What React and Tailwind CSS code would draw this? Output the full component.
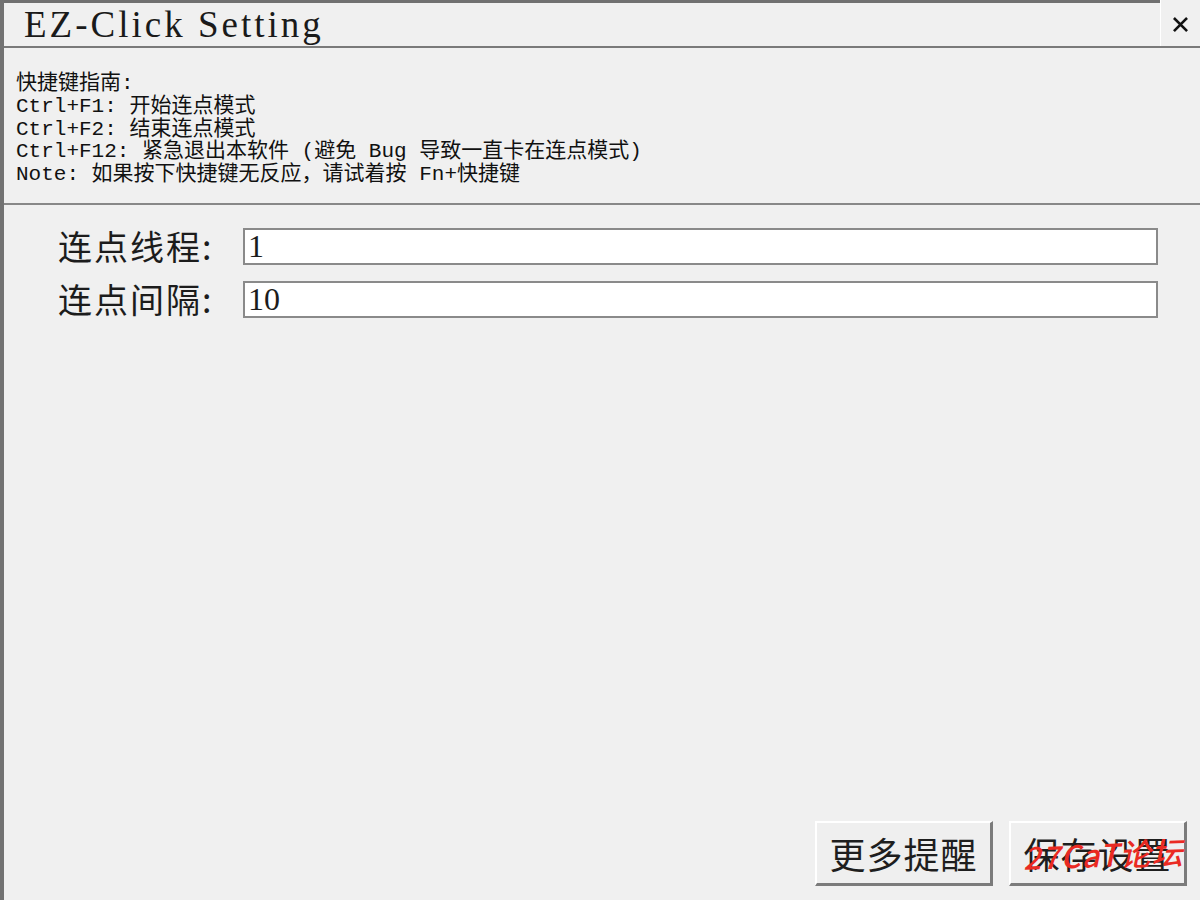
const mono = { fontFamily: '"Liberation Mono", "Noto Sans CJK SC", monospace' };

function CloseIcon() {
  return (
    <svg width="15" height="15" viewBox="0 0 16 16" className="block">
      <path d="M2 2 L14 14 M14 2 L2 14" stroke="#111" strokeWidth="2.8" strokeLinecap="square" />
    </svg>
  );
}

function Field({ label, value }) {
  return (
    <div className="flex items-center">
      <div className="w-[239px] shrink-0 pl-[54px] whitespace-nowrap text-[34px] leading-none text-[#1c1c1c] font-['Noto_Sans_CJK_SC',sans-serif] tracking-[2px]">
        {label}
      </div>
      <div className="flex-1 h-[37px] bg-white border-2 border-[#8a8a8a] flex items-center pl-[3px] text-[32px] leading-none text-[#1c1c1c] font-['Liberation_Serif','Noto_Sans_CJK_SC',serif]">
        {value}
      </div>
    </div>
  );
}

function RaisedButton({ children, mark }) {
  return (
    <button className="relative w-[178px] h-[65px] bg-[#efefef] border-t-2 border-l-2 border-t-white border-l-white border-b-[3px] border-r-[3px] border-b-[#7b7b7b] border-r-[#7b7b7b] flex items-center justify-center text-[36px] leading-none text-[#1e1e1e] font-['Noto_Sans_CJK_SC',sans-serif] tracking-[1px]">
      {children}
      {mark && (
        <span className="absolute left-[12px] top-[15px] whitespace-nowrap text-[31px] italic font-medium text-[#ea2a22] font-['Noto_Sans_CJK_SC',sans-serif] -rotate-2 tracking-[1px]">
          27CaT论坛
        </span>
      )}
    </button>
  );
}

export default function App() {
  return (
    <div className="w-[1200px] h-[900px] bg-[#f0f0f0] flex flex-col border-l-4 border-[#727272] overflow-hidden">
      {/* title bar */}
      <div className="h-[48px] flex border-b-2 border-[#7a7a7a] shrink-0">
        <div className="flex-1 border-t-[3px] border-[#707070] flex items-center pl-[20px]">
          <span className="text-[37px] leading-none text-[#1a1a1a] font-['Liberation_Serif',serif] tracking-[3px]">EZ-Click Setting</span>
        </div>
        <div className="w-[40px] border-l border-white flex items-center justify-center pt-[3px]">
          <CloseIcon />
        </div>
      </div>

      {/* hotkey guide */}
      <div className="pl-[12px] pt-[25px] pb-[16px] border-b-2 border-[#888888] text-[21px] leading-[22.75px] text-[#111]" style={mono}>
        <div>快捷键指南:</div>
        <div>Ctrl+F1: 开始连点模式</div>
        <div>Ctrl+F2: 结束连点模式</div>
        <div>Ctrl+F12: 紧急退出本软件 (避免 Bug 导致一直卡在连点模式)</div>
        <div>Note: 如果按下快捷键无反应，请试着按 Fn+快捷键</div>
      </div>

      {/* settings */}
      <div className="flex flex-col gap-[16px] pt-[23px] pr-[42px]">
        <Field label="连点线程:" value="1" />
        <Field label="连点间隔:" value="10" />
      </div>

      {/* actions */}
      <div className="mt-auto flex justify-end gap-[16px] pr-[13px] pb-[14px]">
        <RaisedButton>更多提醒</RaisedButton>
        <RaisedButton mark>保存设置</RaisedButton>
      </div>
    </div>
  );
}
